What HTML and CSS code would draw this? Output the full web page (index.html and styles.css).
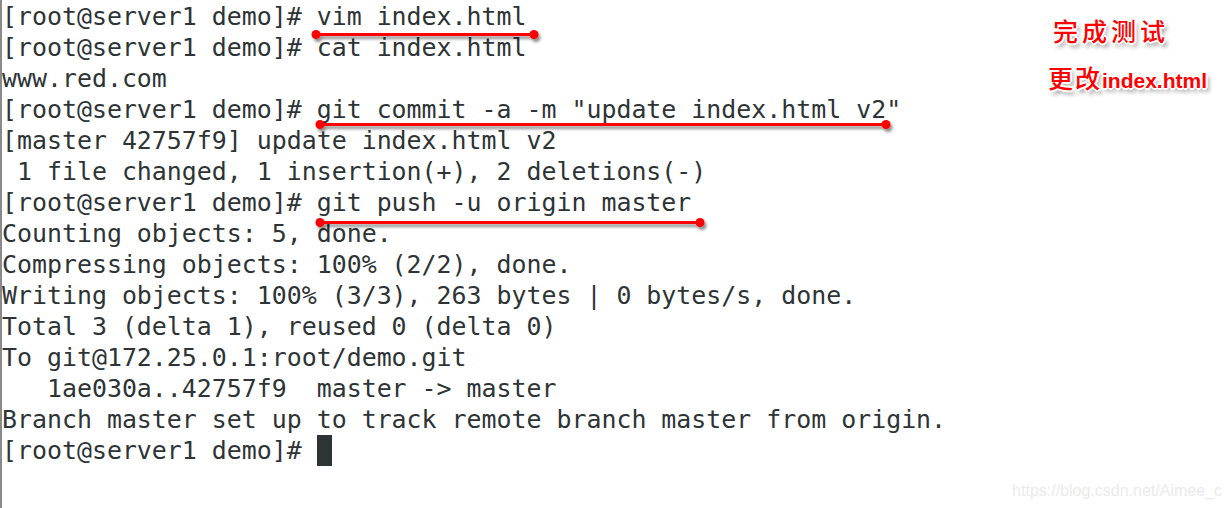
FILE: index.html
```html
<!DOCTYPE html>
<html>
<head>
<meta charset="utf-8">
<link rel="stylesheet" href="styles.css">
</head>
<body>
<div class="screen">
  <pre class="term">[root@server1 demo]# vim index.html
[root@server1 demo]# cat index.html
www.red.com
[root@server1 demo]# git commit -a -m "update index.html v2"
[master 42757f9] update index.html v2
 1 file changed, 1 insertion(+), 2 deletions(-)
[root@server1 demo]# git push -u origin master
Counting objects: 5, done.
Compressing objects: 100% (2/2), done.
Writing objects: 100% (3/3), 263 bytes | 0 bytes/s, done.
Total 3 (delta 1), reused 0 (delta 0)
To git@172.25.0.1:root/demo.git
   1ae030a..42757f9  master -&gt; master
Branch master set up to track remote branch master from origin.
[root@server1 demo]# <span class="cursor"> </span></pre>
  <svg class="marks" width="1232" height="508" viewBox="0 0 1232 508">
    <defs>
      <filter id="sh" x="-5%" y="-200%" width="110%" height="500%">
        <feDropShadow dx="2" dy="3" stdDeviation="1.6" flood-color="#000" flood-opacity="0.45"/>
      </filter>
    </defs>
    <g filter="url(#sh)" fill="#f00" stroke="#f00">
      <line x1="316" y1="34.5" x2="534" y2="34.5" stroke-width="3"/>
      <circle cx="316" cy="34.5" r="4.5" stroke="none"/>
      <circle cx="534" cy="34.5" r="4.5" stroke="none"/>
      <line x1="320" y1="124.5" x2="886" y2="124.5" stroke-width="3"/>
      <circle cx="320" cy="124.5" r="4.5" stroke="none"/>
      <circle cx="886" cy="124.5" r="4.5" stroke="none"/>
      <line x1="320" y1="222.5" x2="700" y2="222.5" stroke-width="3"/>
      <circle cx="320" cy="222.5" r="4.5" stroke="none"/>
      <circle cx="700" cy="222.5" r="4.5" stroke="none"/>
    </g>
  </svg>
  <div class="notes">
    <div class="note note-a">完成测试</div>
    <div class="note note-b"><span class="cn">更改</span><span class="en">index.html</span></div>
  </div>
  <div class="watermark">https://blog.csdn.net/Aimee_c</div>
</div>
</body>
</html>
```
FILE: styles.css
```css
html, body {
  margin: 0;
  padding: 0;
  background: #ffffff;
}

.screen {
  position: relative;
  width: 1232px;
  height: 508px;
  overflow: hidden;
  background: #ffffff;
  border-left: 2px solid #8a8a8a;
  box-sizing: border-box;
}

.term {
  margin: 0;
  padding: 1px 0 0 0;
  font-family: "DejaVu Sans Mono", monospace;
  font-size: 24.9px;
  line-height: 31px;
  color: #2e3436;
  white-space: pre;
}

.cursor {
  display: inline-block;
  width: 15px;
  height: 31px;
  vertical-align: top;
  background: #2e3436;
}

.marks {
  position: absolute;
  left: -2px;
  top: 0;
  pointer-events: none;
}

.notes {
  position: absolute;
  left: 1046px;
  top: 13px;
  display: flex;
  flex-direction: column;
  gap: 13px;
}

.note {
  color: #ff0000;
  line-height: 34px;
  text-shadow:
    -1px -1px 0 #fff, 1px -1px 0 #fff, -1px 1px 0 #fff, 1px 1px 0 #fff,
    -2px 0 0 #fff, 2px 0 0 #fff, 0 -2px 0 #fff, 0 2px 0 #fff,
    3px 4px 4px rgba(0, 0, 0, 0.45);
}

.note-a {
  padding-left: 5px;
  font-family: "Noto Sans CJK SC", sans-serif;
  font-size: 25px;
  font-weight: 500;
  letter-spacing: 4px;
}

.note-b .cn {
  font-family: "Noto Sans CJK SC", sans-serif;
  font-size: 25px;
  font-weight: 500;
  letter-spacing: 2px;
}

.note-b .en {
  font-family: "Liberation Sans", Arial, sans-serif;
  font-weight: bold;
  font-size: 21px;
}

.watermark {
  position: absolute;
  right: 10px;
  bottom: 8px;
  font-family: "Liberation Sans", Arial, sans-serif;
  font-size: 16px;
  color: #ebebeb;
}
```
